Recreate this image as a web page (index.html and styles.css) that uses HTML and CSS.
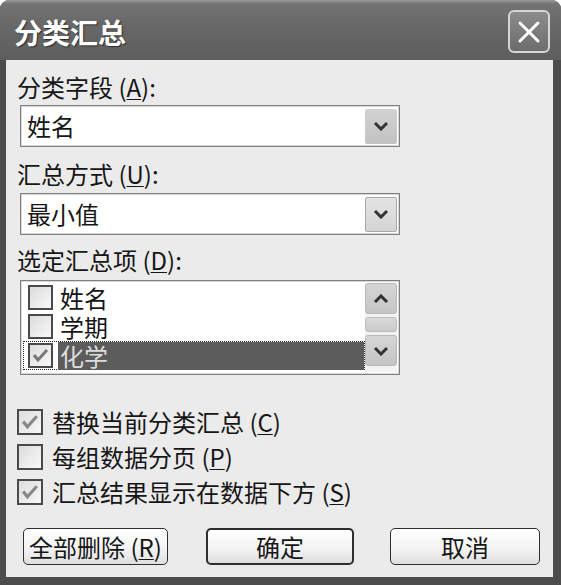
FILE: index.html
```html
<!DOCTYPE html>
<html lang="zh-CN">
<head>
  <meta charset="UTF-8" />
  <title>分类汇总</title>
  <link rel="stylesheet" href="styles.css">
</head>
<body>
  <div class="dialog">
    <div class="titlebar">
      <span class="title">分类汇总</span>
      <span class="close">
        <svg width="24" height="24" viewBox="0 0 24 24"><path d="M3 3 L21 21 M21 3 L3 21" stroke="#fff" stroke-width="3" stroke-linecap="round"/></svg>
      </span>
    </div>

    <div class="client">
      <!-- campo di raggruppamento -->
      <div class="field-label lbl-1">分类字段 (<u>A</u>):</div>
      <div class="combo">
        <span class="combo-value">姓名</span>
        <span class="drop-btn hot">
          <svg width="16" height="10" viewBox="0 0 16 10"><path d="M2 2 L8 8 L14 2" fill="none" stroke="#333" stroke-width="3"/></svg>
        </span>
      </div>

      <div class="field-label lbl-2">汇总方式 (<u>U</u>):</div>
      <div class="combo combo-2">
        <span class="combo-value">最小值</span>
        <span class="drop-btn">
          <svg width="16" height="10" viewBox="0 0 16 10"><path d="M2 2 L8 8 L14 2" fill="none" stroke="#333" stroke-width="3"/></svg>
        </span>
      </div>

      <div class="field-label lbl-3">选定汇总项 (<u>D</u>):</div>
      <div class="listbox">
        <div class="list-items">
          <div class="list-item"><span class="check"></span><span class="item-text">姓名</span></div>
          <div class="list-item"><span class="check"></span><span class="item-text">学期</span></div>
          <div class="list-item selected">
            <span class="check">
              <svg width="21" height="21" viewBox="0 0 21 21"><path d="M4 10 L8 15 L17 5" fill="none" stroke="#777" stroke-width="3"/></svg>
            </span>
            <span class="item-text">化学</span>
          </div>
        </div>
        <div class="scrollbar">
          <span class="scroll-btn">
            <svg width="16" height="10" viewBox="0 0 16 10"><path d="M2 8 L8 2 L14 8" fill="none" stroke="#333" stroke-width="3"/></svg>
          </span>
          <span class="scroll-thumb"></span>
          <span class="scroll-btn">
            <svg width="16" height="10" viewBox="0 0 16 10"><path d="M2 2 L8 8 L14 2" fill="none" stroke="#333" stroke-width="3"/></svg>
          </span>
        </div>
      </div>

      <!-- opzioni -->
      <div class="options">
        <div class="option">
          <span class="check box">
            <svg width="22" height="22" viewBox="0 0 21 21"><path d="M4 10 L8 15 L17 5" fill="none" stroke="#888" stroke-width="3"/></svg>
          </span>
          替换当前分类汇总 (<u>C</u>)
        </div>
        <div class="option"><span class="check box"></span>每组数据分页 (<u>P</u>)</div>
        <div class="option">
          <span class="check box">
            <svg width="22" height="22" viewBox="0 0 21 21"><path d="M4 10 L8 15 L17 5" fill="none" stroke="#888" stroke-width="3"/></svg>
          </span>
          汇总结果显示在数据下方 (<u>S</u>)
        </div>
      </div>

      <div class="actions">
        <button class="btn btn-remove">全部删除 (<u>R</u>)</button>
        <button class="btn btn-ok">确定</button>
        <button class="btn btn-cancel">取消</button>
      </div>
    </div>
  </div>
</body>
</html>
```

FILE: styles.css
```css
:root {
  --frame: #4c4c4c;
  --sfondo: #ebebeb;
  --testo: #161616;
  --bordo: #808080;
  --selezione: #5c5c5c;
}

* {
  margin: 0;
  padding: 0;
  box-sizing: border-box;
  font-family: "Noto Sans CJK SC", "Liberation Sans", sans-serif;
}

body {
  background: #fff;
  width: 561px;
  height: 585px;
  overflow: hidden;
}

.dialog {
  width: 561px;
  height: 585px;
  background: var(--frame);
  border-radius: 9px 9px 0 0;
  display: flex;
  flex-direction: column;
  overflow: hidden;
}

.titlebar {
  height: 60px;
  flex-shrink: 0;
  display: flex;
  align-items: flex-start;
  justify-content: space-between;
  padding: 0 11px 0 14px;
  background: linear-gradient(180deg, #9a9a9a 0, #737373 4px, #686868 40%, #5e5e5e 100%);
}

.title {
  color: #fff;
  font-size: 28px;
  font-weight: bold;
  line-height: 30px;
  margin-top: 17px;
  text-shadow: 1px 1px 1px #2a2a2a;
}

.close {
  width: 42px;
  height: 43px;
  margin-top: 10px;
  border: 2px solid #d6d6d6;
  border-radius: 6px;
  background: linear-gradient(180deg, #8c8c8c, #6c6c6c);
  display: flex;
  align-items: center;
  justify-content: center;
}

.client {
  flex: 1;
  margin: 0 8px 8px 6px;
  background: var(--sfondo);
  padding: 12px 0 0 11px;
  color: var(--testo);
}

.field-label {
  font-size: 24px;
  line-height: 30px;
  height: 30px;
}

.field-label u, .option u, .btn u {
  text-decoration-thickness: 1px;
  text-underline-offset: 2px;
}

.lbl-2 { margin-top: 12px; }
.lbl-3 { margin-top: 10px; }

.combo {
  margin: 3px 0 0 3px;
  width: 380px;
  height: 42px;
  border: 1px solid var(--bordo);
  box-shadow: inset 0 0 0 1px #d8d8d8;
  background: #fff;
  display: flex;
  align-items: center;
  justify-content: space-between;
  padding: 0 2px 0 6px;
}

.combo-2 {
  margin-top: 4px;
}

.combo-value {
  font-size: 24px;
  line-height: 30px;
}

.drop-btn {
  width: 32px;
  height: 35px;
  background: linear-gradient(180deg, #d2d2d2, #c2c2c2);
  border-radius: 2px;
  display: flex;
  align-items: center;
  justify-content: center;
}

.combo-2 .drop-btn {
  background: linear-gradient(180deg, #e4e4e4, #d4d4d4);
  border: 1px solid #a8a8a8;
}

.listbox {
  margin: 5px 0 0 3px;
  width: 380px;
  height: 95px;
  border: 1px solid var(--bordo);
  box-shadow: inset 0 0 0 1px #d8d8d8;
  background: #fff;
  display: flex;
  padding: 2px 2px 2px 2px;
}

.list-items {
  flex: 1;
  display: flex;
  flex-direction: column;
}

.list-item {
  height: 29px;
  display: flex;
  align-items: center;
  padding-left: 5px;
  font-size: 24px;
  line-height: 28px;
}

.list-item .item-text {
  margin-left: 5px;
  padding: 0 3px 0 2px;
  height: 28px;
}

.list-item.selected {
  border: 1px dotted #222;
  padding-left: 4px;
  margin-right: 0;
}

.list-item.selected .item-text {
  flex: 1;
  background: var(--selezione);
  color: #ddd;
}

.check {
  width: 25px;
  height: 25px;
  border: 2px solid #4a4a4a;
  background: linear-gradient(135deg, #dcdcdc, #f8f8f8);
  display: flex;
  align-items: center;
  justify-content: center;
  flex-shrink: 0;
}

.scrollbar {
  width: 32px;
  display: flex;
  flex-direction: column;
  gap: 3px;
  background: #f2f2f2;
}

.scroll-btn {
  height: 31px;
  background: linear-gradient(180deg, #d6d6d6, #c4c4c4);
  border: 1px solid #b8b8b8;
  border-radius: 3px;
  display: flex;
  align-items: center;
  justify-content: center;
}

.scroll-thumb {
  height: 15px;
  background: linear-gradient(180deg, #dadada, #cacaca);
  border: 1px solid #bdbdbd;
  border-radius: 3px;
}

.options {
  margin-top: 29px;
  display: flex;
  flex-direction: column;
}

.option {
  height: 35px;
  display: flex;
  align-items: center;
  font-size: 24px;
  line-height: 30px;
}

.option .box {
  width: 26px;
  height: 26px;
  margin-right: 9px;
}

.actions {
  margin-top: 19px;
  display: flex;
  gap: 38px;
  padding-left: 6px;
}

.btn {
  height: 37px;
  border: 1px solid #2e2e2e;
  border-radius: 5px;
  background: linear-gradient(180deg, #ffffff, #f2f2f2 60%, #dedede);
  color: var(--testo);
  font-size: 24px;
  line-height: 30px;
  cursor: pointer;
}

.btn-remove { width: 145px; }

.btn-ok {
  width: 148px;
  border-width: 2px;
}

.btn-cancel {
  width: 150px;
  margin-left: -2px;
}
```
